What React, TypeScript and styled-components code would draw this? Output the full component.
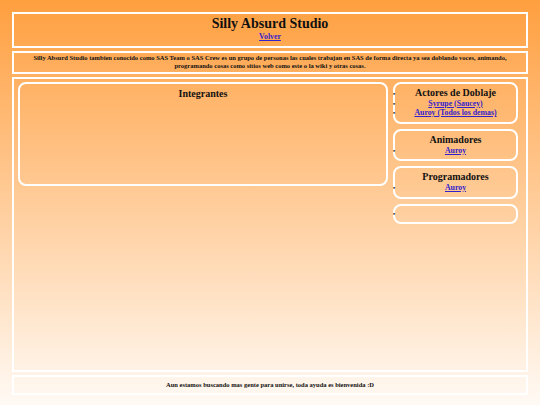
import styled, { createGlobalStyle } from "styled-components";

const GlobalStyle = createGlobalStyle`
  html, body {
    margin: 0;
    padding: 0;
  }

  body {
    font-family: "Liberation Serif", "Times New Roman", serif;
    color: #111;
  }
`

const Page = styled.div`
  box-sizing: border-box;
  height: 100vh;
  min-height: 405px;
  display: flex;
  flex-direction: column;
  gap: 3px;
  padding: 12px 12px 10px;
  background: linear-gradient(#ff9f3f, #fffaf5);
`

const Panel = styled.div`
  border: 2px solid #fff;
  text-align: center;
  font-weight: bold;
  font-size: 8px;
  line-height: 9.5px;
`

const Header = styled(Panel)`
  padding: 2px 0 4px;
`

const Title = styled.h1`
  margin: 0;
  font-size: 14px;
  line-height: 16px;
`

const Link = styled.a`
  color: #3322cc;
  font-size: 7.8px;
  line-height: 9.5px;
  text-decoration: underline;
`

const Description = styled(Panel)`
  padding: 1px 4px 2px;
  font-size: 6.5px;
  line-height: 8px;
`

const Main = styled(Panel)`
  flex: 1;
  display: flex;
  align-items: flex-start;
  gap: 5px;
  padding: 3px 8px 0 4px;
`

const Card = styled.div`
  box-sizing: border-box;
  border: 2px solid #fff;
  border-radius: 8px;
`

const MembersCard = styled(Card)`
  flex: 1;
  height: 104px;
  padding-top: 4px;
`

const CardTitle = styled.div`
  font-size: 10px;
  line-height: 12px;
`

const Roles = styled.ul`
  width: 125px;
  margin: 0;
  padding: 0;
  display: flex;
  flex-direction: column;
  gap: 5px;
  list-style: none;
`

const RoleCard = styled(Card)`
  padding: 3px 0 4px;
  min-height: 18px;
`

const LineList = styled.ul`
  margin: 0;
  padding: 0;
`

const Line = styled.li<{ $bullet?: boolean }>`
  display: ${(p) => (p.$bullet ? "list-item" : "block")};
  list-style: disc outside;
  min-height: 9.5px;
  line-height: 9.5px;

  &::marker {
    content: "•";
    font-size: 6px;
  }
`

const Footer = styled(Panel)`
  padding: 4px 0;
  font-size: 6.5px;
  line-height: 8px;
`

const roles = [
    { title: "Actores de Doblaje", bulletTitle: true, members: ["Syrupe (Saucey)", "Auroy (Todos los demas)"] },
    { title: "Animadores", bulletTitle: false, members: ["Auroy"] },
    { title: "Programadores", bulletTitle: false, members: ["Auroy"] },
]

const App = () => {
    return (<>
            <GlobalStyle/>
            <Page>
                <Header>
                    <Title>Silly Absurd Studio</Title>
                    <Link href="#">Volver</Link>
                </Header>

                <Description>
                    Silly Absurd Studio tambien conocido como SAS Team o SAS Crew es un grupo de personas las cuales
                    trabajan en SAS de forma directa ya sea doblando voces, animando, programando cosas como sitios
                    web como este o la wiki y otras cosas.
                </Description>

                <Main>
                    <MembersCard>
                        <CardTitle>Integrantes</CardTitle>
                    </MembersCard>

                    <Roles>
                        {roles.map((role) => (
                            <RoleCard as="li" key={role.title}>
                                <LineList>
                                    <Line $bullet={role.bulletTitle}>
                                        <CardTitle>{role.title}</CardTitle>
                                    </Line>
                                    {role.members.map((name) => (
                                        <Line $bullet key={name}>
                                            <Link href="#">{name}</Link>
                                        </Line>
                                    ))}
                                </LineList>
                            </RoleCard>
                        ))}
                        <RoleCard as="li">
                            <LineList>
                                <Line $bullet>{"\u00a0"}</Line>
                            </LineList>
                        </RoleCard>
                    </Roles>
                </Main>

                <Footer>Aun estamos buscando mas gente para unirse, toda ayuda es bienvenida :D</Footer>
            </Page>
        </>
    )
}

export default App;
